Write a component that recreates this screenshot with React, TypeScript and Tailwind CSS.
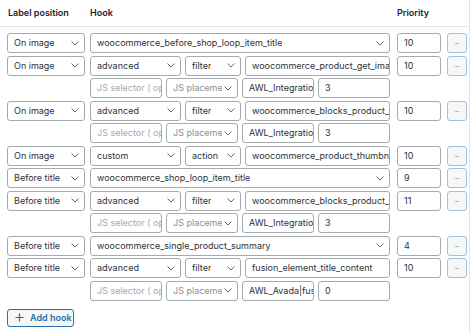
type Entry = {
  label: string;
  priority: string;
  hook?: string;
  type?: string;
  action?: string;
  name?: string;
  callback?: string;
  args?: string;
};

const entries: Entry[] = [
  { label: "On image", priority: "10", hook: "woocommerce_before_shop_loop_item_title" },
  {
    label: "On image",
    priority: "10",
    type: "advanced",
    action: "filter",
    name: "woocommerce_product_get_image",
    callback: "AWL_Integrations_Callbacks",
    args: "3",
  },
  {
    label: "On image",
    priority: "10",
    type: "advanced",
    action: "filter",
    name: "woocommerce_blocks_product_grid_item_html",
    callback: "AWL_Integrations_Callbacks",
    args: "3",
  },
  { label: "On image", priority: "10", type: "custom", action: "action", name: "woocommerce_product_thumbnails" },
  { label: "Before title", priority: "9", hook: "woocommerce_shop_loop_item_title" },
  {
    label: "Before title",
    priority: "11",
    type: "advanced",
    action: "filter",
    name: "woocommerce_blocks_product_grid_item_html",
    callback: "AWL_Integrations_Callbacks",
    args: "3",
  },
  { label: "Before title", priority: "4", hook: "woocommerce_single_product_summary" },
  {
    label: "Before title",
    priority: "10",
    type: "advanced",
    action: "filter",
    name: "fusion_element_title_content",
    callback: "AWL_Avada|fusion_element_title",
    args: "0",
  },
];

function Chevron() {
  return (
    <svg width="8" height="5" viewBox="0 0 8 5" className="shrink-0" fill="none">
      <path d="M0.8 0.8l3.2 3.2 3.2-3.2" stroke="#50575e" strokeWidth="0.9" strokeLinecap="round" strokeLinejoin="round" />
    </svg>
  );
}

function Select({ value, w, muted }: { value: string; w: string; muted?: boolean }) {
  return (
    <div
      className={`${w} h-[20px] shrink-0 flex items-center justify-between gap-[2px] rounded-[3px] border border-[#a7aaad] bg-white pl-[6px] pr-[5px]`}
    >
      <span className={`overflow-hidden whitespace-nowrap ${muted ? "text-[#8c8f94]" : "text-[#2c3338]"}`}>
        {value}
      </span>
      <Chevron />
    </div>
  );
}

function Field({ value, w, muted }: { value: string; w: string; muted?: boolean }) {
  return (
    <div
      className={`${w} h-[20px] shrink-0 flex items-center overflow-hidden whitespace-nowrap rounded-[3px] border border-[#a7aaad] bg-white px-[6px] ${
        muted ? "text-[#a7aaad]" : "text-[#2c3338]"
      }`}
    >
      {value}
    </div>
  );
}

function HookRow({ e }: { e: Entry }) {
  return (
    <div className="flex items-start">
      <Select value={e.label} w="w-[78px]" />
      <div className="ml-[5px] flex w-[300px] flex-col gap-[2.5px]">
        {e.hook ? (
          <Select value={e.hook} w="w-[300px]" />
        ) : (
          <div className="flex gap-[4px]">
            <Select value={e.type!} w="w-[91px]" />
            <Select value={e.action!} w="w-[56px]" />
            <Field value={e.name!} w="w-[145px]" />
          </div>
        )}
        {e.callback && (
          <div className="flex gap-[4px]">
            <Field value="JS selector ( optional )" w="w-[72px]" muted />
            <Select value="JS placement" w="w-[72px]" muted />
            <Field value={e.callback} w="w-[72px]" />
            <Field value={e.args!} w="w-[72px]" />
          </div>
        )}
      </div>
      <Field value={e.priority} w="ml-[7px] w-[44px]" />
      <button className="ml-[6px] flex h-[20px] w-[20px] items-center justify-center rounded-[3px] border border-[#a5c0d8] bg-[#f6f7f7] text-[8px] leading-none text-[#8ea6bc]">
        –
      </button>
    </div>
  );
}

export default function App() {
  return (
    <div
      className="h-[334px] w-[474px] bg-white text-[9px] text-[#2c3338]"
      style={{ fontFamily: "Inter, 'Noto Sans', sans-serif" }}
    >
      <div className="h-full w-[470px] border-r border-[#e2e4e7]">
        <div className="flex h-[27px] items-center border-b border-[#e2e4e7] pb-[1px] font-semibold text-[#1d2327]">
          <span className="ml-[8px] w-[82px]">Label position</span>
          <span className="w-[307px]">Hook</span>
          <span>Priority</span>
        </div>
        <div className="flex flex-col gap-[2.5px] pl-[7px] pt-[6px]">
          {entries.map((e, i) => (
            <HookRow key={i} e={e} />
          ))}
        </div>
        <button className="ml-[7px] mt-[8px] flex h-[18px] w-[67px] items-center gap-[6px] rounded-[3px] border border-[#2271b1] bg-[#f6f7f7] pl-[7px] font-semibold text-[#2271b1]">
          <svg width="9" height="9" viewBox="0 0 9 9" fill="none">
            <path d="M4.5 0.5v8M0.5 4.5h8" stroke="#2271b1" strokeWidth="1.2" />
          </svg>
          Add hook
        </button>
      </div>
    </div>
  );
}
